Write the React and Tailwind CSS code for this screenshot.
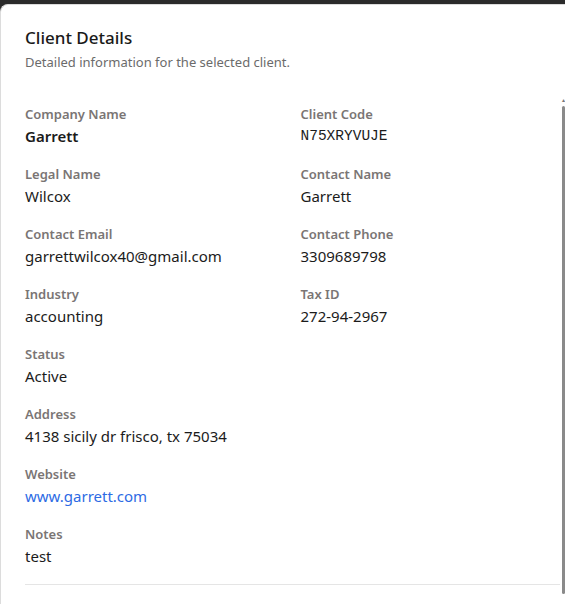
import React from "react";

const fields = [
  ["Company Name", "Garrett", "bold"],
  ["Client Code", "N75XRYVUJE", "mono"],
  ["Legal Name", "Wilcox"],
  ["Contact Name", "Garrett"],
  ["Contact Email", "garrettwilcox40@gmail.com"],
  ["Contact Phone", "3309689798"],
  ["Industry", "accounting"],
  ["Tax ID", "272-94-2967"],
  ["Status", "Active", "full"],
  ["Address", "4138 sicily dr frisco, tx 75034", "full"],
  ["Website", "www.garrett.com", "link"],
  ["Notes", "test", "full"],
];

function Field({ label, value, kind }) {
  const wide = kind === "full" || kind === "link";
  let valueCls = "text-[15px] leading-[22px] text-[#1b1b1b]";
  if (kind === "bold") valueCls = "text-[15px] leading-[22px] font-semibold text-[#1b1b1b]";
  if (kind === "mono") valueCls = "text-[14.5px] leading-[22px] text-[#1b1b1b] font-['Liberation_Mono',monospace]";
  if (kind === "link") valueCls = "text-[15px] leading-[22px] text-[#2d6be4]";
  return (
    <div className={wide ? "col-span-2" : ""}>
      <div className="text-[13px] leading-5 font-semibold text-[#7a7574]">{label}</div>
      <div className={`mt-px ${valueCls}`}>{value}</div>
    </div>
  );
}

export default function App() {
  return (
    <div className="w-[565px] h-[604px] bg-[#2b2b2b] pt-[4px] overflow-hidden font-['Noto_Sans',sans-serif]">
      <div className="relative h-full bg-white rounded-tl-lg border-l border-t border-[#dcdcdc] pl-[24px] pr-[5px] pt-[19px]">
        <h2 className="text-[17px] leading-7 font-medium text-[#1a1a1a]">Client Details</h2>
        <p className="text-[13px] leading-5 text-[#6b6b6b]">Detailed information for the selected client.</p>

        <div className="mt-8 grid grid-cols-2 gap-x-4 gap-y-[17px]">
          {fields.map(([l, v, k]) => (
            <Field key={l} label={l} value={v} kind={k} />
          ))}
        </div>

        <div className="mt-[17px] border-t border-[#e5e5e5]" />

        {/* thin scrollbar overlay */}
        <div className="absolute right-0 top-[92px] bottom-0 w-[4px] flex flex-col items-center">
          <div className="text-[6px] leading-[6px] text-[#777]">▴</div>
          <div className="mt-[3px] w-[3px] flex-1 bg-[#8a8a8a] rounded-sm mb-[10px]" />
        </div>
      </div>
    </div>
  );
}
